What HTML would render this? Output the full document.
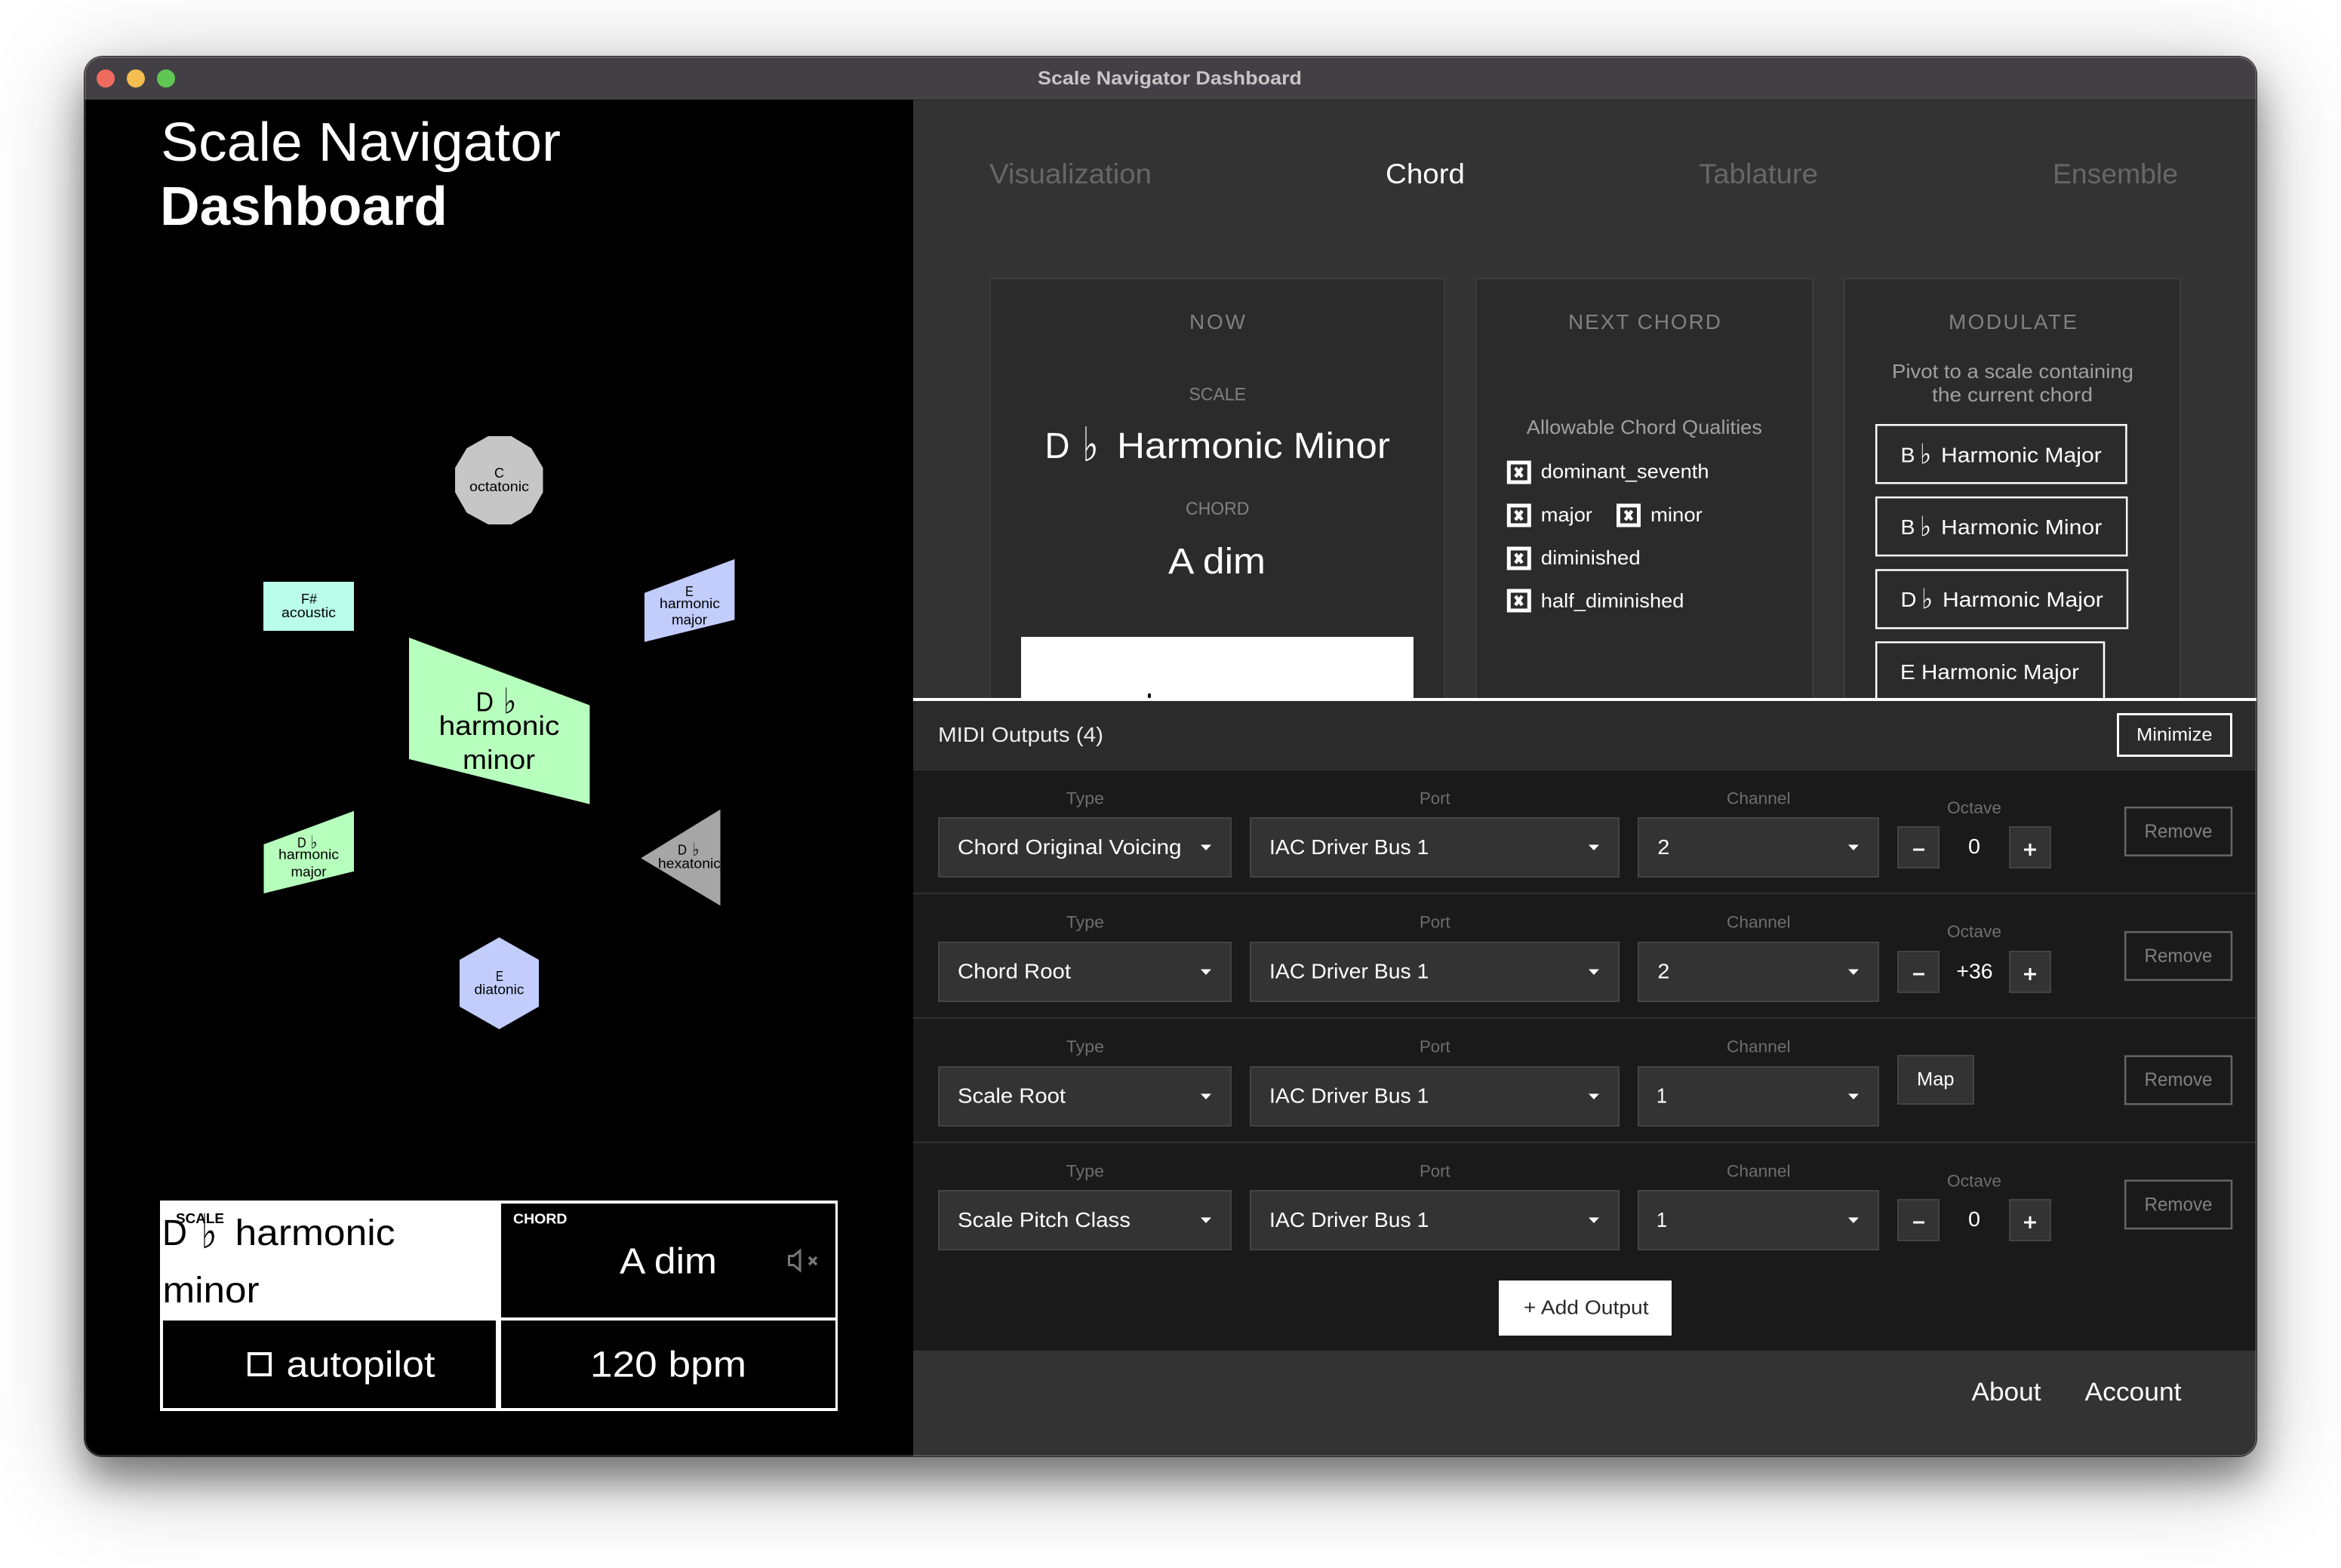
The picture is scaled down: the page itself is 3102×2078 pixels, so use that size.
<!DOCTYPE html>
<html><head><meta charset="utf-8"><title>Scale Navigator Dashboard</title>
<style>
html,body{margin:0;padding:0;width:3102px;height:2078px;overflow:hidden;background:#fff}
.win{position:absolute;left:112px;top:75px;width:2878px;height:1855px;border-radius:24px;overflow:hidden;box-shadow:0 0 0 1px #222,0 30px 50px rgba(0,0,0,.42),0 25px 130px rgba(0,0,0,.3)}
.win svg{position:absolute;left:-112px;top:-75px}
.edge{position:absolute;left:0;top:0;right:0;bottom:0;border-radius:24px;box-shadow:inset 0 0 0 1.5px rgba(255,255,255,.22);pointer-events:none}
text{font-family:"Liberation Sans",sans-serif;white-space:pre}
.fl{font-family:"DejaVu Sans",sans-serif}
.k{fill:#000}.w{fill:#fff}.g{fill:#808080}.d{fill:#6e6e6e}.t{fill:#676767}
.sel{fill:#333;stroke:#444;stroke-width:2}
.rm{fill:none;stroke:#666;stroke-width:2.5}
.ln{fill:#2f2f2f}
</style></head><body>
<div class="win">
<svg width="3102" height="2078" viewBox="0 0 3102 2078" xmlns="http://www.w3.org/2000/svg">
<!-- base -->
<rect x="112" y="75" width="2878" height="57" fill="#424045"/>
<circle cx="140" cy="104" r="12" fill="#ef6b5f"/><circle cx="180" cy="104" r="12" fill="#f5be4f"/><circle cx="220" cy="104" r="12" fill="#60c654"/>
<text x="1375" y="112" font-size="25" font-weight="700" fill="#c6c6c6" textLength="350" lengthAdjust="spacingAndGlyphs">Scale Navigator Dashboard</text>
<rect x="112" y="132" width="1098" height="1798" fill="#000"/>
<rect x="1210" y="133" width="1780" height="792" fill="#333"/>
<rect x="1210" y="132" width="1780" height="1" fill="#222"/>

<!-- heading -->
<text x="213" y="213" font-size="72" class="w" textLength="530" lengthAdjust="spacingAndGlyphs">Scale Navigator</text>
<text x="212" y="298" font-size="72" font-weight="700" class="w" textLength="381" lengthAdjust="spacingAndGlyphs">Dashboard</text>

<!-- graph -->
<polygon points="647,578 677.5,578 704,594 719.5,620 719.5,652.5 704,679.5 677.5,695 647,695 618.5,679.5 603,652.5 603,620 618.5,594" fill="#c6c6c6"/>
<text x="655" y="633" font-size="18" class="k" textLength="13" lengthAdjust="spacingAndGlyphs">C</text>
<text x="622" y="651" font-size="18" class="k" textLength="79" lengthAdjust="spacingAndGlyphs">octatonic</text>

<rect x="349" y="771" width="120" height="65" fill="#b9fdea"/>
<text x="399" y="800" font-size="18" class="k" textLength="21" lengthAdjust="spacingAndGlyphs">F#</text>
<text x="373" y="818" font-size="18" class="k" textLength="72" lengthAdjust="spacingAndGlyphs">acoustic</text>

<polygon points="854,785.7 973.4,741 973.4,821.4 854,850.7" fill="#c2cdfc"/>
<text x="908" y="790" font-size="18" class="k" textLength="11" lengthAdjust="spacingAndGlyphs">E</text>
<text x="874" y="806" font-size="18" class="k" textLength="80" lengthAdjust="spacingAndGlyphs">harmonic</text>
<text x="890" y="827.5" font-size="18" class="k" textLength="47" lengthAdjust="spacingAndGlyphs">major</text>

<polygon points="542,845 781.4,934.6 781.4,1065.7 542,1006" fill="#b7ffbc"/>
<text x="630.5" y="942.5" font-size="36" class="k" textLength="23.5" lengthAdjust="spacingAndGlyphs">D</text>
<text x="667" y="945.500" font-size="47" class="k fl" textLength="17" lengthAdjust="spacingAndGlyphs">♭</text>
<text x="581.500" y="974" font-size="36" class="k" textLength="160" lengthAdjust="spacingAndGlyphs">harmonic</text>
<text x="613" y="1019" font-size="36" class="k" textLength="96" lengthAdjust="spacingAndGlyphs">minor</text>

<polygon points="349.5,1119 469,1074.7 469,1154.7 349.5,1184" fill="#b7ffbc"/>
<text x="394" y="1123" font-size="18" class="k" textLength="11.7" lengthAdjust="spacingAndGlyphs">D</text>
<text x="411.500" y="1124.500" font-size="24" class="k fl" textLength="9" lengthAdjust="spacingAndGlyphs">♭</text>
<text x="369" y="1138.7" font-size="18" class="k" textLength="80" lengthAdjust="spacingAndGlyphs">harmonic</text>
<text x="385.5" y="1161.7" font-size="18" class="k" textLength="47" lengthAdjust="spacingAndGlyphs">major</text>

<polygon points="849.3,1137.3 954.5,1072.7 954.5,1200.3" fill="#a6a6a6"/>
<text x="898" y="1132.7" font-size="18" class="k" textLength="12" lengthAdjust="spacingAndGlyphs">D</text>
<text x="917.500" y="1134.200" font-size="24" class="k fl" textLength="9" lengthAdjust="spacingAndGlyphs">♭</text>
<text x="872" y="1150.7" font-size="18" class="k" textLength="83" lengthAdjust="spacingAndGlyphs">hexatonic</text>

<polygon points="661.5,1242.3 714,1272 714,1334 661.5,1364 609,1334 609,1272" fill="#c2cdfc"/>
<text x="657" y="1300" font-size="18" class="k" textLength="10" lengthAdjust="spacingAndGlyphs">E</text>
<text x="628.5" y="1317.3" font-size="18" class="k" textLength="66" lengthAdjust="spacingAndGlyphs">diatonic</text>

<!-- status box -->
<rect x="212" y="1591" width="898" height="279" fill="#fff"/>
<rect x="664" y="1595" width="443" height="151" fill="#000"/>
<rect x="216" y="1750" width="441" height="116" fill="#000"/>
<rect x="664" y="1750" width="443" height="116" fill="#000"/>
<text x="215" y="1650" font-size="48" class="k" textLength="33" lengthAdjust="spacingAndGlyphs">D</text>
<text x="266.500" y="1654" font-size="63" class="k fl" textLength="21" lengthAdjust="spacingAndGlyphs">♭</text>
<text x="311.500" y="1650" font-size="48" class="k" textLength="212" lengthAdjust="spacingAndGlyphs">harmonic</text>
<text x="215.500" y="1726" font-size="48" class="k" textLength="128" lengthAdjust="spacingAndGlyphs">minor</text>
<text x="233" y="1621" font-size="18" font-weight="700" class="k" textLength="64" lengthAdjust="spacingAndGlyphs">SCALE</text>
<text x="680" y="1621.5" font-size="18" font-weight="700" class="w" textLength="71.5" lengthAdjust="spacingAndGlyphs">CHORD</text>
<text x="821" y="1687.7" font-size="48" class="w" textLength="129" lengthAdjust="spacingAndGlyphs">A dim</text>
<path d="M1045.5 1664.5h6l8.500-7v26l-8.500-7h-6z" fill="none" stroke="#777" stroke-width="3"/>
<path d="M1072 1666l10 10M1082 1666l-10 10" fill="none" stroke="#777" stroke-width="3.500"/>
<rect x="330" y="1794" width="28" height="28" fill="none" stroke="#fff" stroke-width="4"/>
<text x="379.500" y="1824.300" font-size="48" class="w" textLength="197" lengthAdjust="spacingAndGlyphs">autopilot</text>
<text x="782" y="1824.300" font-size="48" class="w" textLength="207" lengthAdjust="spacingAndGlyphs">120 bpm</text>

<!-- tabs -->
<text x="1311" y="243" font-size="37" class="t" textLength="215" lengthAdjust="spacingAndGlyphs">Visualization</text>
<text x="1836" y="243" font-size="37" class="w" textLength="105" lengthAdjust="spacingAndGlyphs">Chord</text>
<text x="2251" y="243" font-size="37" class="t" textLength="158" lengthAdjust="spacingAndGlyphs">Tablature</text>
<text x="2720" y="243" font-size="37" class="t" textLength="166" lengthAdjust="spacingAndGlyphs">Ensemble</text>

<!-- cards -->
<g fill="#2b2b2b" stroke="#3d3d3d" stroke-width="2">
<rect x="1312" y="369" width="602" height="570"/>
<rect x="1956" y="369" width="446" height="570"/>
<rect x="2444" y="369" width="445" height="570"/>
</g>
<text x="1576" y="436" font-size="28" class="g" textLength="74" lengthAdjust="spacing">NOW</text>
<text x="1575.500" y="530.600" font-size="24" class="g" textLength="75.500" lengthAdjust="spacingAndGlyphs">SCALE</text>
<text x="1384.500" y="607" font-size="48" class="w" textLength="33" lengthAdjust="spacingAndGlyphs">D</text>
<text x="1434.500" y="611" font-size="63" class="w fl" textLength="21" lengthAdjust="spacingAndGlyphs">♭</text>
<text x="1480" y="607" font-size="48" class="w" textLength="362" lengthAdjust="spacingAndGlyphs">Harmonic Minor</text>
<text x="1571" y="682" font-size="24" class="g" textLength="84.400" lengthAdjust="spacingAndGlyphs">CHORD</text>
<text x="1548" y="760" font-size="48" class="w" textLength="129" lengthAdjust="spacingAndGlyphs">A dim</text>
<rect x="1353" y="844" width="520" height="81" fill="#fff"/>
<rect x="1521" y="919" width="4" height="6" rx="1.500" fill="#000"/>

<text x="2078" y="436" font-size="28" class="g" textLength="202" lengthAdjust="spacing">NEXT CHORD</text>
<text x="2022.800" y="575" font-size="26" fill="#a0a0a0" textLength="312.200" lengthAdjust="spacingAndGlyphs">Allowable Chord Qualities</text>
<g fill="none" stroke="#fff" stroke-width="5">
<rect x="1999.300" y="613" width="27" height="26"/>
<rect x="1999.300" y="670" width="27" height="26"/>
<rect x="2144.500" y="670" width="27" height="26"/>
<rect x="1999.300" y="727" width="27" height="26"/>
<rect x="1999.300" y="783" width="27" height="26"/>
</g>
<g fill="none" stroke="#fff" stroke-width="4.500">
<path d="M2008 620l9 12M2017 620l-9 12"/>
<path d="M2008 677l9 12M2017 677l-9 12"/>
<path d="M2153.500 677l9 12M2162.500 677l-9 12"/>
<path d="M2008 734l9 12M2017 734l-9 12"/>
<path d="M2008 790l9 12M2017 790l-9 12"/>
</g>
<text x="2041.800" y="633.600" font-size="26" class="w" textLength="222.700" lengthAdjust="spacingAndGlyphs">dominant_seventh</text>
<text x="2041.800" y="691" font-size="26" class="w" textLength="68.200" lengthAdjust="spacingAndGlyphs">major</text>
<text x="2187" y="691" font-size="26" class="w" textLength="68.800" lengthAdjust="spacingAndGlyphs">minor</text>
<text x="2041.800" y="748" font-size="26" class="w" textLength="131.900" lengthAdjust="spacingAndGlyphs">diminished</text>
<text x="2041.800" y="805" font-size="26" class="w" textLength="189.700" lengthAdjust="spacingAndGlyphs">half_diminished</text>

<text x="2582" y="436" font-size="28" class="g" textLength="170" lengthAdjust="spacing">MODULATE</text>
<text x="2507" y="501" font-size="26" fill="#a0a0a0" textLength="320" lengthAdjust="spacingAndGlyphs">Pivot to a scale containing</text>
<text x="2560" y="532" font-size="26" fill="#a0a0a0" textLength="213" lengthAdjust="spacingAndGlyphs">the current chord</text>
<g fill="none" stroke="#fff" stroke-width="2.500">
<rect x="2486.200" y="563.200" width="331.200" height="77"/>
<rect x="2486.200" y="659.200" width="332" height="77"/>
<rect x="2486.200" y="755.500" width="332.800" height="77"/>
<rect x="2486.200" y="851.200" width="301.800" height="90"/>
</g>
<text x="2518.500" y="612.300" font-size="28" class="w" textLength="19" lengthAdjust="spacingAndGlyphs">B</text>
<text x="2544" y="614.600" font-size="37" class="w fl" textLength="15" lengthAdjust="spacingAndGlyphs">♭</text>
<text x="2572" y="612.300" font-size="28" class="w" textLength="212.800" lengthAdjust="spacingAndGlyphs">Harmonic Major</text>
<text x="2518.500" y="708" font-size="28" class="w" textLength="19" lengthAdjust="spacingAndGlyphs">B</text>
<text x="2544" y="710.300" font-size="37" class="w fl" textLength="15" lengthAdjust="spacingAndGlyphs">♭</text>
<text x="2572" y="708" font-size="28" class="w" textLength="213.300" lengthAdjust="spacingAndGlyphs">Harmonic Minor</text>
<text x="2518.500" y="804" font-size="28" class="w" textLength="21" lengthAdjust="spacingAndGlyphs">D</text>
<text x="2546" y="806.300" font-size="37" class="w fl" textLength="15" lengthAdjust="spacingAndGlyphs">♭</text>
<text x="2574" y="804" font-size="28" class="w" textLength="212.800" lengthAdjust="spacingAndGlyphs">Harmonic Major</text>
<text x="2518" y="900" font-size="28" class="w" textLength="237" lengthAdjust="spacingAndGlyphs">E Harmonic Major</text>

<!-- lower panel -->
<rect x="1210" y="929" width="1780" height="91" fill="#2b2b2b"/>
<rect x="1210" y="925" width="1780" height="4" fill="#fff"/>
<text x="1243" y="983" font-size="28" class="w" fill-opacity=".92" textLength="219" lengthAdjust="spacingAndGlyphs">MIDI Outputs (4)</text>
<rect x="2806.500" y="946.500" width="150" height="55" fill="none" stroke="#fff" stroke-width="3"/>
<text x="2831" y="981.500" font-size="24" class="w" textLength="100.600" lengthAdjust="spacingAndGlyphs">Minimize</text>
<rect x="1210" y="1020" width="1780" height="770" fill="#1a1a1a"/>
<rect x="1210" y="1019" width="1780" height="2" class="ln"/>
<rect x="1210" y="1183" width="1780" height="2" class="ln"/>
<rect x="1210" y="1348" width="1780" height="2" class="ln"/>
<rect x="1210" y="1513" width="1780" height="2" class="ln"/>

<!-- row 1 -->
<text x="1412.800" y="1065.500" font-size="22" class="d" textLength="50.200" lengthAdjust="spacingAndGlyphs">Type</text>
<text x="1881" y="1065.500" font-size="22" class="d" textLength="40.700" lengthAdjust="spacingAndGlyphs">Port</text>
<text x="2288" y="1065.500" font-size="22" class="d" textLength="84.500" lengthAdjust="spacingAndGlyphs">Channel</text>
<rect x="1244" y="1084" width="387" height="78" class="sel"/><rect x="1657" y="1084" width="488" height="78" class="sel"/><rect x="2171" y="1084" width="318" height="78" class="sel"/>
<text x="1269" y="1132" font-size="28" class="w" textLength="296.600" lengthAdjust="spacingAndGlyphs">Chord Original Voicing</text>
<text x="1682" y="1132" font-size="28" class="w" textLength="211.400" lengthAdjust="spacingAndGlyphs">IAC Driver Bus 1</text>
<text x="2196.400" y="1132" font-size="28" class="w" textLength="16" lengthAdjust="spacingAndGlyphs">2</text>
<path d="M1591 1119.500h14l-7 7.500zM2105 1119.500h14l-7 7.500zM2449 1119.500h14l-7 7.500z" fill="#fff"/>
<text x="2580" y="1078" font-size="22" class="d" textLength="72" lengthAdjust="spacingAndGlyphs">Octave</text>
<rect x="2515" y="1096" width="54" height="54" class="sel"/><rect x="2663" y="1096" width="54" height="54" class="sel"/>
<path d="M2535 1124.500h15v3h-15zM2682 1124.500h16v3h-16zM2688.500 1118h3v16h-3z" fill="#fff"/>
<text x="2608" y="1131" font-size="28" class="w" textLength="16" lengthAdjust="spacingAndGlyphs">0</text>
<rect x="2816.200" y="1070.200" width="140.800" height="63.500" class="rm"/>
<text x="2841.500" y="1110" font-size="25" class="g" textLength="90" lengthAdjust="spacingAndGlyphs">Remove</text>

<!-- row 2 -->
<text x="1412.800" y="1229.500" font-size="22" class="d" textLength="50.200" lengthAdjust="spacingAndGlyphs">Type</text>
<text x="1881" y="1229.500" font-size="22" class="d" textLength="40.700" lengthAdjust="spacingAndGlyphs">Port</text>
<text x="2288" y="1229.500" font-size="22" class="d" textLength="84.500" lengthAdjust="spacingAndGlyphs">Channel</text>
<rect x="1244" y="1249" width="387" height="78" class="sel"/><rect x="1657" y="1249" width="488" height="78" class="sel"/><rect x="2171" y="1249" width="318" height="78" class="sel"/>
<text x="1269" y="1296.500" font-size="28" class="w" textLength="150" lengthAdjust="spacingAndGlyphs">Chord Root</text>
<text x="1682" y="1296.500" font-size="28" class="w" textLength="211.400" lengthAdjust="spacingAndGlyphs">IAC Driver Bus 1</text>
<text x="2196.400" y="1296.500" font-size="28" class="w" textLength="16" lengthAdjust="spacingAndGlyphs">2</text>
<path d="M1591 1284.500h14l-7 7.500zM2105 1284.500h14l-7 7.500zM2449 1284.500h14l-7 7.500z" fill="#fff"/>
<text x="2580" y="1242" font-size="22" class="d" textLength="72" lengthAdjust="spacingAndGlyphs">Octave</text>
<rect x="2515" y="1261" width="54" height="54" class="sel"/><rect x="2663" y="1261" width="54" height="54" class="sel"/>
<path d="M2535 1289.500h15v3h-15zM2682 1289.500h16v3h-16zM2688.500 1283h3v16h-3z" fill="#fff"/>
<text x="2592.400" y="1296.500" font-size="28" class="w" textLength="48.200" lengthAdjust="spacingAndGlyphs">+36</text>
<rect x="2816.200" y="1235.200" width="140.800" height="63.500" class="rm"/>
<text x="2841.500" y="1275" font-size="25" class="g" textLength="90" lengthAdjust="spacingAndGlyphs">Remove</text>

<!-- row 3 -->
<text x="1412.800" y="1394.500" font-size="22" class="d" textLength="50.200" lengthAdjust="spacingAndGlyphs">Type</text>
<text x="1881" y="1394.500" font-size="22" class="d" textLength="40.700" lengthAdjust="spacingAndGlyphs">Port</text>
<text x="2288" y="1394.500" font-size="22" class="d" textLength="84.500" lengthAdjust="spacingAndGlyphs">Channel</text>
<rect x="1244" y="1414" width="387" height="78" class="sel"/><rect x="1657" y="1414" width="488" height="78" class="sel"/><rect x="2171" y="1414" width="318" height="78" class="sel"/>
<text x="1269" y="1461.500" font-size="28" class="w" textLength="143" lengthAdjust="spacingAndGlyphs">Scale Root</text>
<text x="1682" y="1461.500" font-size="28" class="w" textLength="211.400" lengthAdjust="spacingAndGlyphs">IAC Driver Bus 1</text>
<text x="2195" y="1461.500" font-size="28" class="w" textLength="14" lengthAdjust="spacingAndGlyphs">1</text>
<path d="M1591 1449.500h14l-7 7.500zM2105 1449.500h14l-7 7.500zM2449 1449.500h14l-7 7.500z" fill="#fff"/>
<rect x="2515" y="1399" width="100" height="64" class="sel"/>
<text x="2540" y="1438.500" font-size="25" class="w" textLength="49.500" lengthAdjust="spacingAndGlyphs">Map</text>
<rect x="2816.200" y="1399.700" width="140.800" height="63.500" class="rm"/>
<text x="2841.500" y="1439" font-size="25" class="g" textLength="90" lengthAdjust="spacingAndGlyphs">Remove</text>

<!-- row 4 -->
<text x="1412.800" y="1559.500" font-size="22" class="d" textLength="50.200" lengthAdjust="spacingAndGlyphs">Type</text>
<text x="1881" y="1559.500" font-size="22" class="d" textLength="40.700" lengthAdjust="spacingAndGlyphs">Port</text>
<text x="2288" y="1559.500" font-size="22" class="d" textLength="84.500" lengthAdjust="spacingAndGlyphs">Channel</text>
<rect x="1244" y="1578" width="387" height="78" class="sel"/><rect x="1657" y="1578" width="488" height="78" class="sel"/><rect x="2171" y="1578" width="318" height="78" class="sel"/>
<text x="1269" y="1626" font-size="28" class="w" textLength="229" lengthAdjust="spacingAndGlyphs">Scale Pitch Class</text>
<text x="1682" y="1626" font-size="28" class="w" textLength="211.400" lengthAdjust="spacingAndGlyphs">IAC Driver Bus 1</text>
<text x="2195" y="1626" font-size="28" class="w" textLength="14" lengthAdjust="spacingAndGlyphs">1</text>
<path d="M1591 1613.500h14l-7 7.500zM2105 1613.500h14l-7 7.500zM2449 1613.500h14l-7 7.500z" fill="#fff"/>
<text x="2580" y="1572.300" font-size="22" class="d" textLength="72" lengthAdjust="spacingAndGlyphs">Octave</text>
<rect x="2515" y="1590" width="54" height="54" class="sel"/><rect x="2663" y="1590" width="54" height="54" class="sel"/>
<path d="M2535 1618.500h15v3h-15zM2682 1618.500h16v3h-16zM2688.500 1612h3v16h-3z" fill="#fff"/>
<text x="2608" y="1625" font-size="28" class="w" textLength="16" lengthAdjust="spacingAndGlyphs">0</text>
<rect x="2816.200" y="1564.600" width="140.800" height="63.500" class="rm"/>
<text x="2841.500" y="1604.500" font-size="25" class="g" textLength="90" lengthAdjust="spacingAndGlyphs">Remove</text>

<!-- add output / footer -->
<rect x="1986" y="1697" width="229" height="73" fill="#fff"/>
<text x="2019" y="1741.500" font-size="26" fill="#2a2a2a" textLength="165.600" lengthAdjust="spacingAndGlyphs">+ Add Output</text>
<rect x="1210" y="1790" width="1780" height="140" fill="#333"/>
<text x="2612.500" y="1856" font-size="34" class="w" textLength="92" lengthAdjust="spacingAndGlyphs">About</text>
<text x="2762.500" y="1856" font-size="34" class="w" textLength="128" lengthAdjust="spacingAndGlyphs">Account</text>
</svg>
<div class="edge"></div>
</div>
</body></html>
